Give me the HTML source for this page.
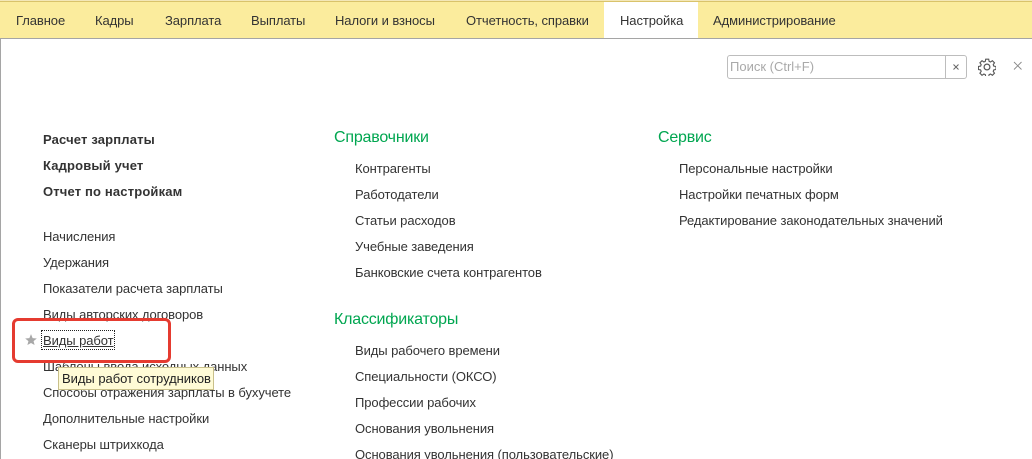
<!DOCTYPE html>
<html lang="ru"><head><meta charset="utf-8"><title>Настройка</title>
<style>
html,body{margin:0;padding:0;background:#fff;width:1032px;height:459px;overflow:hidden}
body{position:relative;font-family:"Liberation Sans",sans-serif;font-size:13px;color:#333}
.t{position:absolute;white-space:nowrap;line-height:16px;letter-spacing:-.08px;margin-top:1px}
.m{margin-top:0}
.b{font-weight:bold;letter-spacing:.16px}
.g{font-size:16px;color:#00A650;line-height:20px;letter-spacing:-.2px}
.a{position:absolute}
</style></head><body>
<div class="a" style="left:0;top:0;width:1032px;height:1px;background:#F3E7B8"></div>
<div class="a" style="left:0;top:1px;width:1032px;height:1px;background:#D9C36B"></div>
<div class="a" style="left:0;top:2px;width:1032px;height:36px;background:#FBEC9D"></div>
<div class="a" style="left:0;top:38px;width:1032px;height:1px;background:#A5A5A5"></div>
<div class="a" style="left:0;top:38px;width:1px;height:421px;background:#A5A5A5"></div>
<div class="a" style="left:604px;top:2px;width:94px;height:36px;background:#fff"></div>
<div class="t m" style="left:16px;top:13px">Главное</div>
<div class="t m" style="left:95px;top:13px">Кадры</div>
<div class="t m" style="left:165px;top:13px">Зарплата</div>
<div class="t m" style="left:251px;top:13px">Выплаты</div>
<div class="t m" style="left:335px;top:13px">Налоги и взносы</div>
<div class="t m" style="left:466px;top:13px">Отчетность, справки</div>
<div class="t m" style="left:620px;top:13px">Настройка</div>
<div class="t m" style="left:713px;top:13px">Администрирование</div>

<div class="a" style="left:727px;top:55px;width:238px;height:22px;border:1px solid #BDBDBD;border-radius:3px;box-sizing:content-box"></div>
<div class="a" style="left:945px;top:56px;width:1px;height:22px;background:#BDBDBD"></div>
<div class="t m" style="left:730px;top:59px;color:#A9A9A9;letter-spacing:0">Поиск (Ctrl+F)</div>
<svg class="a" style="left:951px;top:62px" width="10" height="10" viewBox="0 0 10 10"><path d="M2.5 2.5L7.5 7.5M7.5 2.5L2.5 7.5" stroke="#666" stroke-width="1" fill="none"/></svg>
<svg class="a" style="left:978px;top:58px" width="18" height="18" viewBox="0 0 18 18"><path d="M7.5 1.5h3l.4 2.2 1.4.6 1.9-1.3 2.1 2.1-1.3 1.9.6 1.4 2.2.4v3l-2.2.4-.6 1.4 1.3 1.9-2.1 2.1-1.9-1.3-1.4.6-.4 2.2h-3l-.4-2.2-1.4-.6-1.9 1.3-2.1-2.1 1.3-1.9-.6-1.4-2.2-.4v-3l2.2-.4.6-1.4-1.3-1.9 2.1-2.1 1.9 1.3 1.4-.6z" transform="translate(.2 -.3)" fill="none" stroke="#555" stroke-width="1.1"/><circle cx="9" cy="9" r="2.9" fill="none" stroke="#555" stroke-width="1.2"/></svg>
<svg class="a" style="left:1013px;top:61px" width="10" height="10" viewBox="0 0 10 10"><path d="M1 1L8.5 8.5M8.5 1L1 8.5" stroke="#888" stroke-width=".9" fill="none"/></svg>

<div class="t b" style="left:43px;top:131px">Расчет зарплаты</div>
<div class="t b" style="left:43px;top:157px">Кадровый учет</div>
<div class="t b" style="left:43px;top:183px">Отчет по настройкам</div>
<div class="t" style="left:43px;top:228px">Начисления</div>
<div class="t" style="left:43px;top:254px">Удержания</div>
<div class="t" style="left:43px;top:280px">Показатели расчета зарплаты</div>
<div class="t" style="left:43px;top:306px">Виды авторских договоров</div>
<div class="t" style="left:43px;top:332px;text-decoration:underline">Виды работ</div>
<div class="t" style="left:43px;top:358px">Шаблоны ввода исходных данных</div>
<div class="t" style="left:43px;top:384px">Способы отражения зарплаты в бухучете</div>
<div class="t" style="left:43px;top:410px">Дополнительные настройки</div>
<div class="t" style="left:43px;top:436px">Сканеры штрихкода</div>
<div class="a" style="left:41px;top:330px;width:72px;height:18px;border:1px dotted #222"></div>
<svg class="a" style="left:25px;top:334px" width="12" height="11" viewBox="0 0 14 13" preserveAspectRatio="none"><path d="M7 .2L8.9 4.9 13.8 5.3 10 8.4 11.2 13 7 10.6 2.8 13 4 8.4 .2 5.3 5.1 4.9z" fill="#A8A8A8"/></svg>
<div class="a" style="left:12px;top:318px;width:153px;height:39px;border:3px solid #E53B30;border-radius:6px"></div>
<div class="a" style="left:58px;top:367px;width:154px;height:21px;background:#FFFBD6;border:1px solid #C9C08A"></div>
<div class="t m" style="left:62px;top:371px;color:#222;letter-spacing:-.03px">Виды работ сотрудников</div>

<div class="t g" style="left:334px;top:127px">Справочники</div>
<div class="t" style="left:355px;top:160px">Контрагенты</div>
<div class="t" style="left:355px;top:186px">Работодатели</div>
<div class="t" style="left:355px;top:212px">Статьи расходов</div>
<div class="t" style="left:355px;top:238px">Учебные заведения</div>
<div class="t" style="left:355px;top:264px">Банковские счета контрагентов</div>
<div class="t g" style="left:334px;top:309px">Классификаторы</div>
<div class="t" style="left:355px;top:342px">Виды рабочего времени</div>
<div class="t" style="left:355px;top:368px">Специальности (ОКСО)</div>
<div class="t" style="left:355px;top:394px">Профессии рабочих</div>
<div class="t" style="left:355px;top:420px">Основания увольнения</div>
<div class="t" style="left:355px;top:446px">Основания увольнения (пользовательские)</div>

<div class="t g" style="left:658px;top:127px">Сервис</div>
<div class="t" style="left:679px;top:160px">Персональные настройки</div>
<div class="t" style="left:679px;top:186px">Настройки печатных форм</div>
<div class="t" style="left:679px;top:212px">Редактирование законодательных значений</div>
</body></html>
